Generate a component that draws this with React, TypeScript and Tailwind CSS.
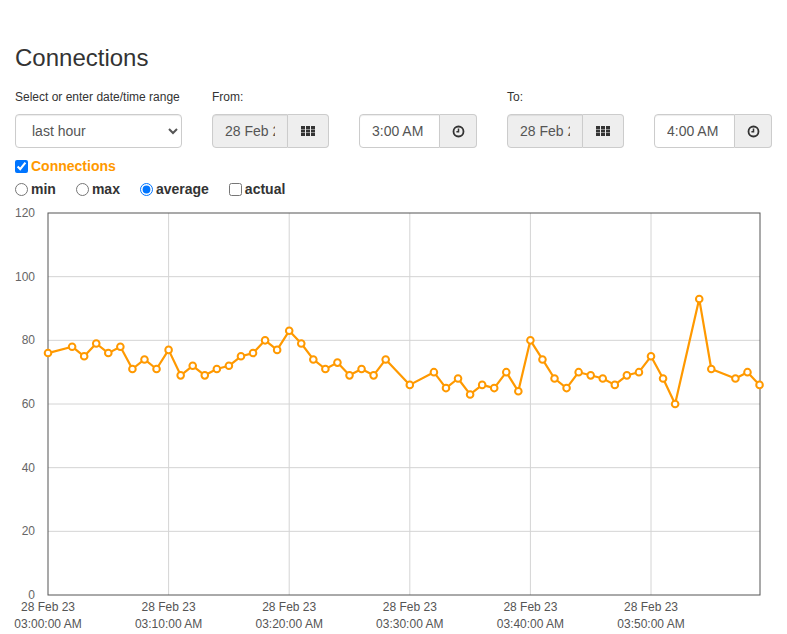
import React from 'react';

const ORANGE = '#ff9900';

// [minute, value]
const points: [number, number][] = [
  [0, 76], [2, 78], [3, 75], [4, 79], [5, 76], [6, 78], [7, 71], [8, 74], [9, 71], [10, 77],
  [11, 69], [12, 72], [13, 69], [14, 71], [15, 72], [16, 75], [17, 76], [18, 80], [19, 77], [20, 83],
  [21, 79], [22, 74], [23, 71], [24, 73], [25, 69], [26, 71], [27, 69], [28, 74], [30, 66], [32, 70],
  [33, 65], [34, 68], [35, 63], [36, 66], [37, 65], [38, 70], [39, 64], [40, 80], [41, 74], [42, 68],
  [43, 65], [44, 70], [45, 69], [46, 68], [47, 66], [48, 69], [49, 70], [50, 75], [51, 68], [52, 60],
  [54, 93], [55, 71], [57, 68], [58, 70], [59, 66],
];

const TOP = 204;
const X0 = 48;
const X1 = 760;
const Y0 = 595 - TOP;
const Y1 = 213 - TOP;
const px = (m: number) => X0 + m * 12.06;
const py = (v: number) => Y0 - (v * (Y0 - Y1)) / 120;

const GridIcon = () => (
  <svg width="14" height="10" viewBox="0 0 14 10">
    {[0, 5, 10].map((x) =>
      [0, 3.5, 7].map((y) => <rect key={`${x}-${y}`} x={x} y={y} width="4" height="3" fill="#333" />)
    )}
  </svg>
);

const ClockIcon = () => (
  <svg width="13" height="13" viewBox="0 0 13 13">
    <circle cx="6.5" cy="6.5" r="5" fill="none" stroke="#333" strokeWidth="1.8" />
    <path d="M6.5 3.6 V6.7 H4.4" fill="none" stroke="#333" strokeWidth="1.5" />
  </svg>
);

function DateGroup({ value }: { value: string }) {
  return (
    <div className="flex h-[34px] w-[117px]">
      <input
        readOnly
        value={value}
        className="h-full w-[76px] rounded-l-[4px] border border-[#ccc] bg-[#eee] px-3 text-[14px] text-[#555] outline-none shadow-[inset_0_1px_1px_rgba(0,0,0,0.075)]"
      />
      <div className="flex h-full flex-1 items-center justify-center rounded-r-[4px] border border-l-0 border-[#ccc] bg-[#eee]">
        <GridIcon />
      </div>
    </div>
  );
}

function TimeGroup({ value }: { value: string }) {
  return (
    <div className="flex h-[34px] w-[118px]">
      <input
        readOnly
        value={value}
        className="h-full w-[81px] rounded-l-[4px] border border-[#ccc] bg-white px-3 text-[14px] text-[#555] outline-none shadow-[inset_0_1px_1px_rgba(0,0,0,0.075)]"
      />
      <div className="flex h-full flex-1 items-center justify-center rounded-r-[4px] border border-l-0 border-[#ccc] bg-[#eee]">
        <ClockIcon />
      </div>
    </div>
  );
}

function Chart() {
  const yTicks = [0, 20, 40, 60, 80, 100, 120];
  const xTicks = ['03:00:00 AM', '03:10:00 AM', '03:20:00 AM', '03:30:00 AM', '03:40:00 AM', '03:50:00 AM'];
  const line = points.map(([m, v]) => `${px(m).toFixed(1)},${py(v).toFixed(1)}`).join(' ');
  return (
    <svg width="787" height="430" className="block" style={{ fontFamily: '"Liberation Sans", Arial, sans-serif' }}>
      {yTicks.slice(1, -1).map((t) => (
        <line key={t} x1={X0} x2={X1} y1={py(t)} y2={py(t)} stroke="#d4d4d4" strokeWidth="1" />
      ))}
      {xTicks.slice(1).map((_, i) => (
        <line key={i} x1={px((i + 1) * 10)} x2={px((i + 1) * 10)} y1={Y1} y2={Y0} stroke="#d4d4d4" strokeWidth="1" />
      ))}
      <rect x={X0} y={Y1} width={X1 - X0} height={Y0 - Y1} fill="none" stroke="#555" strokeWidth="1" />
      {yTicks.map((t) => (
        <text key={t} x="35" y={py(t) + 4} textAnchor="end" fontSize="12" fill="#666">
          {t}
        </text>
      ))}
      {xTicks.map((label, i) => (
        <g key={label}>
          <text x={px(i * 10)} y={Y0 + 16} textAnchor="middle" fontSize="12" fill="#555">
            28 Feb 23
          </text>
          <text x={px(i * 10)} y={Y0 + 33} textAnchor="middle" fontSize="12" fill="#555">
            {label}
          </text>
        </g>
      ))}
      <polyline points={line} fill="none" stroke={ORANGE} strokeWidth="2.2" strokeLinejoin="round" />
      {points.map(([m, v]) => (
        <circle key={m} cx={px(m)} cy={py(v)} r="3.3" fill="white" stroke={ORANGE} strokeWidth="2" />
      ))}
    </svg>
  );
}

export default function App() {
  return (
    <div className="min-h-[634px] bg-white text-[#333]" style={{ fontFamily: '"Liberation Sans", Arial, sans-serif' }}>
      <div className="px-[15px] pt-[45px]">
        <h3 className="h-[26px] text-[24px] font-medium leading-[26px]">Connections</h3>

        <div className="mt-[18px] flex gap-[30px]">
          <div className="w-[167px]">
            <div className="mb-[8px] h-[17px] text-[12px] leading-[17px]">Select or enter date/time range</div>
            <select
              defaultValue="last hour"
              className="h-[34px] w-full rounded-[4px] border border-[#ccc] bg-white px-3 text-[14px] text-[#555] outline-none shadow-[inset_0_1px_1px_rgba(0,0,0,0.075)]"
            >
              <option>last hour</option>
              <option>last day</option>
              <option>last week</option>
            </select>
          </div>
          <div>
            <div className="mb-[8px] h-[17px] text-[12px] leading-[17px]">From:</div>
            <div className="flex gap-[30px]">
              <DateGroup value="28 Feb 2023" />
              <TimeGroup value="3:00 AM" />
            </div>
          </div>
          <div>
            <div className="mb-[8px] h-[17px] text-[12px] leading-[17px]">To:</div>
            <div className="flex gap-[30px]">
              <DateGroup value="28 Feb 2023" />
              <TimeGroup value="4:00 AM" />
            </div>
          </div>
        </div>

        <label className="mt-[10px] flex h-[17px] items-center gap-[3px] text-[14px] font-bold leading-[17px]">
          <input type="checkbox" defaultChecked className="m-0 h-[13px] w-[13px]" />
          <span style={{ color: ORANGE }}>Connections</span>
        </label>

        <div className="mt-[6px] flex h-[17px] items-center gap-[20px] text-[14px] font-bold leading-[17px]">
          <label className="flex items-center gap-[3px]">
            <input type="radio" name="agg" className="m-0 h-[13px] w-[13px]" />
            <span>min</span>
          </label>
          <label className="flex items-center gap-[3px]">
            <input type="radio" name="agg" className="m-0 h-[13px] w-[13px]" />
            <span>max</span>
          </label>
          <label className="flex items-center gap-[3px]">
            <input type="radio" name="agg" defaultChecked className="m-0 h-[13px] w-[13px]" />
            <span>average</span>
          </label>
          <label className="flex items-center gap-[3px]">
            <input type="checkbox" className="m-0 h-[13px] w-[13px]" />
            <span>actual</span>
          </label>
        </div>
      </div>

      <div className="mt-[6px]">
        <Chart />
      </div>
    </div>
  );
}
